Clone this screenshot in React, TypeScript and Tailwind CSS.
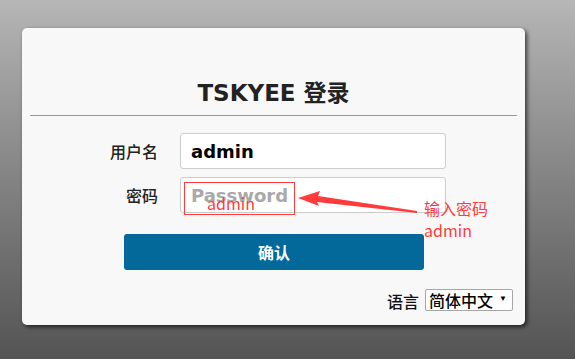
import { useState } from 'react';

const cjk = { fontFamily: '"Noto Sans CJK SC", "DejaVu Sans", sans-serif' };
const latin = { fontFamily: '"DejaVu Sans", "Noto Sans CJK SC", sans-serif' };

export default function App() {
  const [user, setUser] = useState('admin');
  const [pwd, setPwd] = useState('');

  return (
    <div className="relative w-[575px] h-[359px] overflow-hidden bg-gradient-to-b from-[#b6b6b6] to-[#545454] pt-[28px] pl-[22px]">
      <div className="w-[503px] h-[297px] bg-[#f8f8f8] rounded-[5px] shadow-[2px_2px_4px_rgba(0,0,0,0.65)] flex flex-col">
        <h1
          className="mt-[50px] h-[30px] leading-[30px] text-center text-[23px] font-bold text-[#222]"
          style={latin}
        >
          TSKYEE 登录
        </h1>
        <div className="mx-2 mt-[7px] h-px bg-[#999]" />

        <div className="mt-[17px] flex flex-col gap-[8px]">
          <div className="flex items-center h-[36px]">
            <label className="w-[136px] text-right text-[16px] font-medium text-[#222]" style={cjk}>
              用户名
            </label>
            <input
              value={user}
              onChange={(e) => setUser(e.target.value)}
              className="ml-[22px] w-[266px] h-[36px] bg-white border border-[#ccc] rounded-[3px] px-[10px] text-[18px] font-bold text-black outline-none"
              style={latin}
            />
          </div>
          <div className="flex items-center h-[36px]">
            <label className="w-[136px] text-right text-[16px] font-medium text-[#222]" style={cjk}>
              密码
            </label>
            <input
              type="password"
              value={pwd}
              onChange={(e) => setPwd(e.target.value)}
              placeholder="Password"
              className="ml-[22px] w-[266px] h-[36px] bg-white border border-[#ccc] rounded-[3px] px-[10px] text-[18px] font-bold text-black placeholder:text-[#a9a9a9] outline-none"
              style={latin}
            />
          </div>
        </div>

        <button
          className="mt-[21px] ml-[102px] w-[300px] h-[36px] bg-[#03699b] rounded-[3px] text-white text-[16px] font-bold"
          style={cjk}
        >
          确认
        </button>

        <div className="mt-[19px] mr-[12px] flex items-center justify-end gap-[6px]">
          <span className="text-[16px] font-medium text-[#111]" style={cjk}>
            语言
          </span>
          <div className="relative">
            <select
              className="appearance-none w-[88px] h-[22px] bg-white border border-[#a6a6a6] rounded-[2px] pl-[3px] text-[16px] leading-[20px] font-medium text-black outline-none"
              style={cjk}
            >
              <option>简体中文</option>
              <option>English</option>
            </select>
            <span className="absolute right-[6px] top-[3px] text-[8px] text-black pointer-events-none">▼</span>
          </div>
        </div>
      </div>

      {/* annotation overlay */}
      <div className="absolute left-[184px] top-[182px] w-[111px] h-[33px] border border-[#ff3b3b] pointer-events-none" />
      <span
        className="absolute left-[207px] top-[194px] text-[16px] leading-[18px] text-[#ff3b3b] pointer-events-none"
        style={cjk}
      >
        admin
      </span>
      <svg className="absolute left-0 top-0 pointer-events-none" width="575" height="359">
        <polygon points="298,198 320,191 318,196 417,211 417,213 317,202 319,206" fill="#ff3b3b" />
      </svg>
      <div
        className="absolute left-[424px] top-[197px] text-[16px] leading-[22px] text-[#ff3b3b] pointer-events-none"
        style={cjk}
      >
        <div>输入密码</div>
        <div>admin</div>
      </div>
    </div>
  );
}
